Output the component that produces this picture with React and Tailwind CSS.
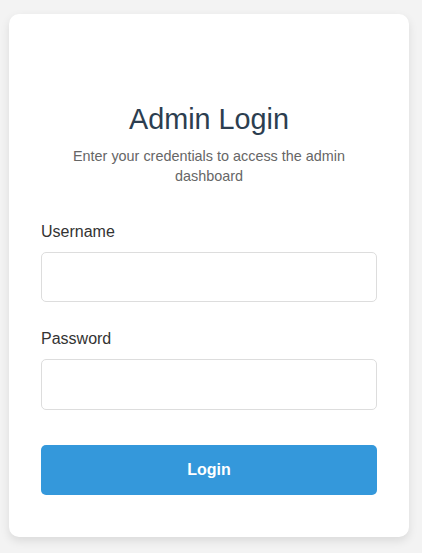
import React, { useState } from "react";

export default function App() {
  const [username, setUsername] = useState("");
  const [password, setPassword] = useState("");

  return (
    <div className="min-h-[553px] bg-[#f3f3f3] pt-[14px] px-[9px] font-['Liberation_Sans',Arial,sans-serif]">
      <div className="w-[400px] bg-white rounded-[10px] shadow-[0_4px_10px_rgba(0,0,0,0.1)] px-[32px] pt-[89px] pb-[42px]">
        <h1 className="text-center text-[28.8px] leading-[32px] text-[#2c3e50] mb-[11px]">
          Admin Login
        </h1>
        <p className="text-center text-[14.4px] leading-[20px] text-[#666] px-[4px] mb-[36px]">
          Enter your credentials to access the admin dashboard
        </p>

        <form onSubmit={(e) => e.preventDefault()}>
          <label className="block text-[16px] leading-[20px] text-[#333] mb-[10px]">
            Username
          </label>
          <input
            type="text"
            value={username}
            onChange={(e) => setUsername(e.target.value)}
            className="block w-full h-[50px] border border-[#ddd] rounded-[5px] px-3 outline-none mb-[27px]"
          />

          <label className="block text-[16px] leading-[20px] text-[#333] mb-[10px]">
            Password
          </label>
          <input
            type="password"
            value={password}
            onChange={(e) => setPassword(e.target.value)}
            className="block w-full h-[51px] border border-[#ddd] rounded-[5px] px-3 outline-none mb-[35px]"
          />

          <button
            type="submit"
            className="block w-full h-[50px] bg-[#3498db] text-white font-bold text-[16px] rounded-[5px]"
          >
            Login
          </button>
        </form>
      </div>
    </div>
  );
}
